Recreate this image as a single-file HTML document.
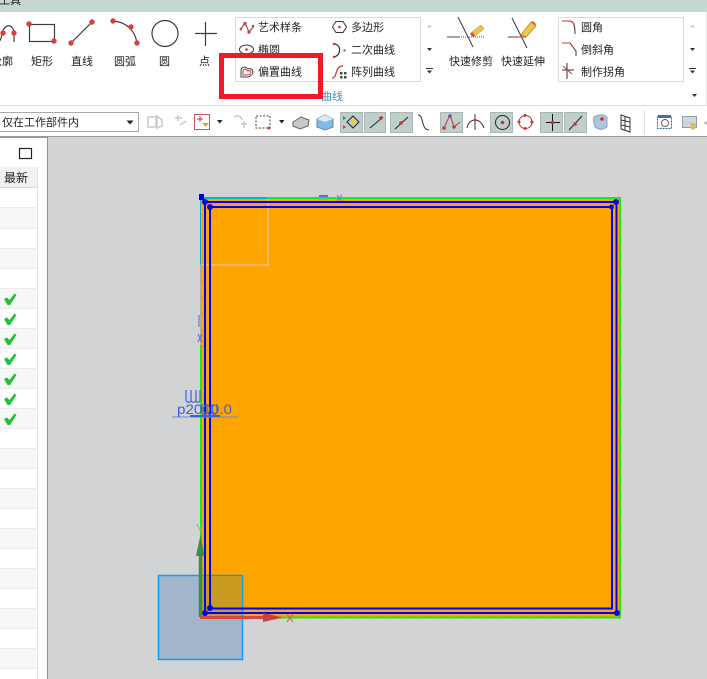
<!DOCTYPE html>
<html><head><meta charset="utf-8">
<style>
html,body{margin:0;padding:0;background:#fff;width:707px;height:679px;overflow:hidden}
svg{display:block}
text{font-family:"Liberation Sans","Noto Sans CJK SC",sans-serif;font-size:11px;fill:#222}
</style></head><body>
<svg width="707" height="679" viewBox="0 0 707 679" xmlns="http://www.w3.org/2000/svg">
<rect width="707" height="679" fill="#fff"/>
<!-- top strip -->
<rect width="707" height="12" fill="#c6d6d3"/>
<text x="-1" y="4">工具</text>
<rect x="0" y="105" width="707" height="1" fill="#dcdcdc"/>
<rect x="706" y="12" width="1" height="93" fill="#e6e6e6"/>
<rect x="0" y="136" width="707" height="2" fill="#9a9a9a"/>

<!-- canvas -->
<rect x="47" y="137" width="660" height="542" fill="#d2d3d5"/>
<rect x="47" y="137" width="1" height="542" fill="#8f9392"/>
<rect x="37" y="167" width="1" height="512" fill="#e4e4e4"/>

<!-- left table -->
<rect x="19.500" y="148.500" width="12" height="10" fill="none" stroke="#222" stroke-width="1.200"/>
<rect x="0" y="167" width="37" height="21" fill="#f1f1f1"/>
<rect x="0" y="187" width="37" height="1" fill="#d8d8d8"/>
<text x="4" y="182" style="font-size:12px">最新</text>
<g fill="#f7f7f7">
<rect x="0" y="208" width="36" height="20"/><rect x="0" y="248" width="36" height="20"/><rect x="0" y="288" width="36" height="20"/><rect x="0" y="328" width="36" height="20"/><rect x="0" y="368" width="36" height="20"/><rect x="0" y="408" width="36" height="20"/><rect x="0" y="448" width="36" height="20"/><rect x="0" y="488" width="36" height="20"/><rect x="0" y="528" width="36" height="20"/><rect x="0" y="568" width="36" height="20"/><rect x="0" y="608" width="36" height="20"/><rect x="0" y="648" width="36" height="20"/>
</g>
<g fill="#ebebeb">
<rect x="0" y="207" width="36" height="1"/><rect x="0" y="228" width="36" height="1"/><rect x="0" y="248" width="36" height="1"/><rect x="0" y="268" width="36" height="1"/><rect x="0" y="288" width="36" height="1"/><rect x="0" y="308" width="36" height="1"/><rect x="0" y="328" width="36" height="1"/><rect x="0" y="348" width="36" height="1"/><rect x="0" y="368" width="36" height="1"/><rect x="0" y="388" width="36" height="1"/><rect x="0" y="408" width="36" height="1"/><rect x="0" y="428" width="36" height="1"/><rect x="0" y="448" width="36" height="1"/><rect x="0" y="468" width="36" height="1"/><rect x="0" y="488" width="36" height="1"/><rect x="0" y="508" width="36" height="1"/><rect x="0" y="528" width="36" height="1"/><rect x="0" y="548" width="36" height="1"/><rect x="0" y="568" width="36" height="1"/><rect x="0" y="588" width="36" height="1"/><rect x="0" y="608" width="36" height="1"/><rect x="0" y="628" width="36" height="1"/><rect x="0" y="648" width="36" height="1"/><rect x="0" y="668" width="36" height="1"/>
</g>
<g fill="#1fc239">
<path d="M4 299l3-1.500 2.500 2.500 5-6.500 2 1.500-6.500 10h-2.500z"/>
<path transform="translate(0 20)" d="M4 299l3-1.500 2.500 2.500 5-6.500 2 1.500-6.500 10h-2.500z"/>
<path transform="translate(0 40)" d="M4 299l3-1.500 2.500 2.500 5-6.500 2 1.500-6.500 10h-2.500z"/>
<path transform="translate(0 60)" d="M4 299l3-1.500 2.500 2.500 5-6.500 2 1.500-6.500 10h-2.500z"/>
<path transform="translate(0 80)" d="M4 299l3-1.500 2.500 2.500 5-6.500 2 1.500-6.500 10h-2.500z"/>
<path transform="translate(0 100)" d="M4 299l3-1.500 2.500 2.500 5-6.500 2 1.500-6.500 10h-2.500z"/>
<path transform="translate(0 120)" d="M4 299l3-1.500 2.500 2.500 5-6.500 2 1.500-6.500 10h-2.500z"/>
</g>

<!-- ribbon big tools -->
<g fill="none" stroke="#3c3c3c" stroke-width="1.200">
<path d="M-4 42c4 0 5-2 6-8 2-11 12-11 12 0v8"/>
<rect x="29.500" y="24.500" width="25" height="17"/>
<path d="M71 43L92 22"/>
<path d="M113 21c14 1 22 10 24 22"/>
<circle cx="165" cy="33.500" r="13"/>
<path d="M205.500 22v24M195 33.500h22"/>
</g>
<g fill="#d8403c">
<circle cx="3" cy="33" r="2.700"/><circle cx="14" cy="33" r="2.700"/>
<circle cx="29" cy="24" r="2.700"/><circle cx="54" cy="41" r="2.700"/>
<circle cx="71" cy="43" r="2.700"/><circle cx="92" cy="22" r="2.700"/>
<circle cx="113" cy="21" r="2.700"/><circle cx="131" cy="27" r="2.700"/><circle cx="137" cy="43" r="2.700"/>
</g>
<text x="-9" y="65">轮廓</text>
<text x="31" y="65">矩形</text>
<text x="71" y="65">直线</text>
<text x="114" y="65">圆弧</text>
<text x="159" y="65">圆</text>
<text x="199" y="65">点</text>

<!-- curve gallery -->
<rect x="235.500" y="17.500" width="185" height="64" fill="none" stroke="#d9d9d9"/>
<path d="M240 30l5-7 4 9 5-6" fill="none" stroke="#666" stroke-width="1.200"/><circle cx="245" cy="23.500" r="1.700" fill="#c44"/><circle cx="249" cy="32" r="1.700" fill="#c44"/><circle cx="241" cy="29" r="1.300" fill="#c44"/><circle cx="253" cy="26" r="1.300" fill="#c44"/>
<text x="258" y="31">艺术样条</text>
<ellipse cx="246.500" cy="49.500" rx="7" ry="4.500" fill="none" stroke="#333"/><circle cx="246.500" cy="49.500" r="1.300" fill="#c33"/>
<text x="258" y="53.500">椭圆</text>
<path d="M241 77v-5c0-3 1-5 3-5 2 0 3 1 4 2 2-1 5 0 5 3 0 2-2 4-5 5z" fill="none" stroke="#444"/>
<path d="M243 75v-3c0-2 1-3 2-3l3 2c2-1 3 0 3 1 0 2-2 3-4 3z" fill="none" stroke="#d0303a"/>
<text x="258" y="75.500">偏置曲线</text>
<path d="M332.500 27l3.500-5.500h7l3.500 5.500-3.500 5.500h-7z" fill="none" stroke="#333"/><circle cx="339.500" cy="27" r="1.300" fill="#c33"/>
<text x="351" y="31">多边形</text>
<path d="M334 44c7 0 8 11 0 13" fill="none" stroke="#333" stroke-width="1.200"/><circle cx="334" cy="44" r="1.200" fill="#c33"/><circle cx="334" cy="57" r="1.200" fill="#c33"/><circle cx="344.500" cy="50.500" r="1.200" fill="#777"/>
<text x="351" y="53.500">二次曲线</text>
<path d="M332 78c6 0 2-12 11-12" fill="none" stroke="#c8333a" stroke-width="1.200"/>
<g fill="#444"><rect x="340" y="72" width="2.500" height="2.500"/><rect x="344" y="72" width="2.500" height="2.500"/><rect x="340" y="76" width="2.500" height="2.500"/><rect x="344" y="76" width="2.500" height="2.500"/></g>
<text x="351" y="75.500">阵列曲线</text>
<g fill="#333">
<path d="M427 27.500l2.500-3 2.500 3z" fill="#ccc"/>
<path d="M427 48l2.500 3 2.500-3z"/>
<path d="M426 68h7v1h-7zM427 70.500l2.500 3 2.500-3z"/>
<path d="M692 94l2.500 3 2.500-3z"/>
</g>
<text x="321" y="100" style="fill:#3c8fb5">曲线</text>

<!-- red highlight -->
<rect x="221.500" y="55.500" width="99" height="41" fill="none" stroke="#ed1c24" stroke-width="5"/>

<!-- quick tools -->
<g fill="none" stroke="#444" stroke-width="1.100">
<path d="M458 17l15 30M447 37h12"/>
<path d="M512 18l15 30M508 37h12"/>
</g>
<path d="M459 37h26" stroke="#555" stroke-dasharray="1 1"/>
<path d="M472 32l9-7 3 4-9 7z" fill="#f0c050" stroke="#b8862a" stroke-width=".5"/><path d="M472 32l3 4-2 1-3-3z" fill="#d8403c"/>
<path d="M521 35l10-13 5 4-10 11z" fill="#f2c84a" stroke="#a67c20" stroke-width=".7"/><path d="M531 22l2-1 3 3-1 2z" fill="#d8603c"/>
<path d="M518 37h8" stroke="#c33"/>
<text x="449" y="65">快速修剪</text>
<text x="501" y="65">快速延伸</text>

<!-- corner gallery -->
<rect x="558.500" y="17.500" width="125" height="64" fill="none" stroke="#d9d9d9"/>
<path d="M562 21h7c5 0 6 4 6 13" fill="none" stroke="#333"/><path d="M562 21h7c4 0 5 2 5 6" fill="none" stroke="#c33"/>
<path d="M562 43h8l6 8v5" fill="none" stroke="#333"/><path d="M562 43h8l5 7" fill="none" stroke="#c33"/>
<path d="M567 63v16M562 70h12" stroke="#333" fill="none"/><path d="M563 66l9 8" stroke="#c33"/>
<text x="581" y="31">圆角</text>
<text x="581" y="53.500">倒斜角</text>
<text x="581" y="75.500">制作拐角</text>
<g fill="#333">
<path d="M690 27.500l2.500-3 2.500 3z" fill="#ccc"/>
<path d="M690 48l2.500 3 2.500-3z"/>
<path d="M689 68h7v1h-7zM690 70.500l2.500 3 2.500-3z"/>
</g>

<!-- select toolbar -->
<rect x="-2" y="112.500" width="140.500" height="19" fill="#fff" stroke="#a9a9a9"/>
<text x="2" y="126">仅在工作部件内</text>
<path d="M126.500 120.500h7l-3.500 4z" fill="#222"/>
<!-- toolbar icons -->
<g fill="none" stroke="#c9c9c9" stroke-width="1.500">
<path d="M148 117h8v10h-8zM157 116l5 4v6l-5 2z"/>
<path d="M175 118h7M178 115v6M180 125l6-4"/>
<path d="M234 117a5 5 0 0 1 8 3M241 124h6M244 121v7"/>
</g>
<rect x="194.500" y="114.500" width="15" height="15" fill="#fff" stroke="#c9515a"/>
<path d="M197 119h6M200 116v6" stroke="#b33" fill="none"/>
<path d="M202 123h7l-3.500 4z" fill="#e8a020"/>
<path d="M217 120h5.500l-2.750 3.500z" fill="#222"/>
<rect x="256" y="116" width="14" height="12" fill="none" stroke="#444" stroke-dasharray="2 1.500"/>
<circle cx="269" cy="128" r="1.500" fill="#d33"/>
<path d="M279 120h5.500l-2.750 3.500z" fill="#222"/>
<path d="M293 122l8-5 8 3-1 6-8 3-7-3z" fill="#c8c8c8" stroke="#666"/>
<path d="M317 119l8-4 8 4v8l-8 3-8-3z" fill="#7fbce8" stroke="#5c8cb0"/><path d="M317 119l8-4 8 4-8 3z" fill="#dfe9f2"/>
<g fill="#bfd0cc" stroke="#a9b8b5">
<rect x="340.500" y="112.500" width="22" height="20"/>
<rect x="364.500" y="112.500" width="21" height="20"/>
<rect x="390.500" y="112.500" width="22" height="20"/>
<rect x="440.500" y="112.500" width="22" height="20"/>
<rect x="490.500" y="112.500" width="22" height="20"/>
<rect x="540.500" y="112.500" width="22" height="20"/>
<rect x="564.500" y="112.500" width="22" height="20"/>
</g>
<path d="M347 122l6-6 6 6-6 6z" fill="none" stroke="#222"/><circle cx="353" cy="122" r="2.200" fill="#f0d020"/>
<path d="M343 116l3 2-3 2z" fill="#1a9a2a"/><path d="M343 125l3 2-3 2z" fill="#d33"/>
<path d="M370 128l13-11M395 129l13-12" stroke="#222" fill="none"/>
<circle cx="381" cy="118" r="1.800" fill="#c33"/><circle cx="401" cy="123" r="1.800" fill="#c33"/>
<path d="M418 115c6 0 3 15 11 15" fill="none" stroke="#333"/>
<path d="M444 128l6-13 4 12 6-5" fill="none" stroke="#c33"/>
<circle cx="450" cy="116" r="1.800" fill="#55a"/><circle cx="454" cy="127" r="1.800" fill="#c33"/><circle cx="444" cy="128" r="1.800" fill="#c33"/>
<path d="M467 128c1-5 4-8 8-8s7 3 9 8M475 114v16" fill="none" stroke="#333"/><circle cx="475" cy="120" r="1.300" fill="#c33"/>
<circle cx="502.500" cy="122.500" r="7" fill="none" stroke="#222"/><circle cx="502.500" cy="122.500" r="1.800" fill="#c33"/>
<circle cx="525.500" cy="122" r="6.500" fill="none" stroke="#c33"/>
<circle cx="525" cy="115.500" r="1.500" fill="#c33"/><circle cx="525" cy="128.500" r="1.500" fill="#c33"/><circle cx="519" cy="122" r="1.500" fill="#c33"/><circle cx="532" cy="122" r="1.500" fill="#c33"/>
<path d="M552.500 114v17M546 122.500h14" stroke="#111" fill="none"/><circle cx="552.500" cy="122.500" r="1.800" fill="#c33"/>
<path d="M569 130l13-14" stroke="#222" fill="none"/><circle cx="575" cy="124" r="1.800" fill="#c33"/>
<path d="M594 117c6-3 9-3 13 0v10c-4 3-8 3-12 0-1-3-2-7-1-10z" fill="#a9c6e0" stroke="#8ca5bc"/><circle cx="602" cy="119" r="1.800" fill="#c33"/>
<path d="M621 115l9 3v14l-9-3zM621 120l9 2M621 125l9 2M625 116v14" fill="none" stroke="#333"/>
<rect x="644" y="110" width="1" height="24" fill="#ddd"/>
<rect x="657.500" y="116.500" width="14" height="12" fill="#fff" stroke="#3a5f9a" stroke-dasharray="2 1"/><rect x="658" y="115" width="13" height="3" fill="#4a6db0"/>
<circle cx="665" cy="123" r="3.500" fill="none" stroke="#666"/>
<rect x="682.500" y="116.500" width="14" height="11" fill="#cfd8e2" stroke="#8f9ba8"/><path d="M690 122l6 2-1 5-4 1z" fill="#e2b860"/>
<path d="M703 123l4-2v4z" fill="#bbb"/>

<!-- model -->
<rect x="201" y="198" width="418" height="419" fill="#ffa500"/>
<!-- datum square under the curves -->
<rect x="158.500" y="575.500" width="84" height="84" fill="#6f97c2" fill-opacity=".48" stroke="#0d9cf2" stroke-width="1.500"/>
<rect x="201" y="576" width="41" height="41" fill="#c89a20"/>
<!-- outline -->
<path d="M268 198H620V617.500H201V345" fill="none" stroke="#10f020" stroke-width="2"/>
<path d="M620 198V617M201 617H620M202 265V617" stroke="#e87040" stroke-width="1" stroke-dasharray="2 14" fill="none"/>
<path d="M201 198H268" stroke="#00b8c8" stroke-width="2"/>
<path d="M200.500 198V265" stroke="#1aa8d0" stroke-width="1"/>
<path d="M200.500 265V345" stroke="#b9a890" stroke-width="1"/>
<path d="M268 199V265H201" fill="none" stroke="#ecc088" stroke-width="1.500"/>
<!-- double blue -->
<path d="M205 202H616.500V613H205Z" fill="none" stroke="#0000ff" stroke-width="2"/>
<path d="M210 207H612V608.500H210Z" fill="none" stroke="#0000ff" stroke-width="2"/>
<g fill="#0000ee">
<circle cx="205" cy="202" r="3"/><circle cx="210" cy="207" r="3"/>
<rect x="199" y="194" width="5" height="6"/>
<circle cx="616" cy="202" r="3"/><circle cx="611.500" cy="207" r="2.500"/>
<circle cx="205" cy="613" r="3"/><circle cx="210" cy="608" r="3"/>
<circle cx="617" cy="613" r="3"/>
</g>
<path d="M319 196h9" stroke="#2a50e8" stroke-width="1.500" fill="none"/>
<path d="M319 199h6" stroke="#8a9ad8" stroke-width="1" fill="none"/>
<path d="M337 195l5 6M342 195l-5 6" stroke="#6a80d8" fill="none"/>
<path d="M199 315v12M198 334l4 8M202 334l-4 8" stroke="#4a6ae0" fill="none"/>
<!-- dimension -->
<g stroke="#3a62d8" fill="none" stroke-width="1.200">
<path d="M172 417h66" stroke="#6a88d8" stroke-width="1"/>
<path d="M186 390v10c0 3 5 3 5 0v-10v10c0 3 5 3 5 0v-10v10c0 3 4 3 4 0v-10"/>
<path d="M202 404v8c0 3 5 3 5 0v-8v8c0 3 5 3 5 0v-8v8c0 3 5 3 5 0v-8"/>
</g>
<text x="177" y="414" style="fill:#3a62d8;font-size:14px" textLength="55" lengthAdjust="spacingAndGlyphs">p2000.0</text>
<rect x="190" y="415" width="30" height="2" fill="#3a62d8"/>

<!-- axes -->
<path d="M200.500 617V550" stroke="#3a8f48" stroke-width="3.500"/>
<path d="M196 556l4.500-21 4 21z" fill="#3a8f48"/>
<path d="M200 617.500H265" stroke="#d04848" stroke-width="3"/>
<path d="M263 613l20 4.500-20 4.500z" fill="#c84040"/>
<path d="M287 614l6 8M293 614l-6 8" stroke="#e85050" fill="none"/>
<path d="M197 524l3 6 3-6" stroke="#9a9" fill="none"/>
</svg>
</body></html>
